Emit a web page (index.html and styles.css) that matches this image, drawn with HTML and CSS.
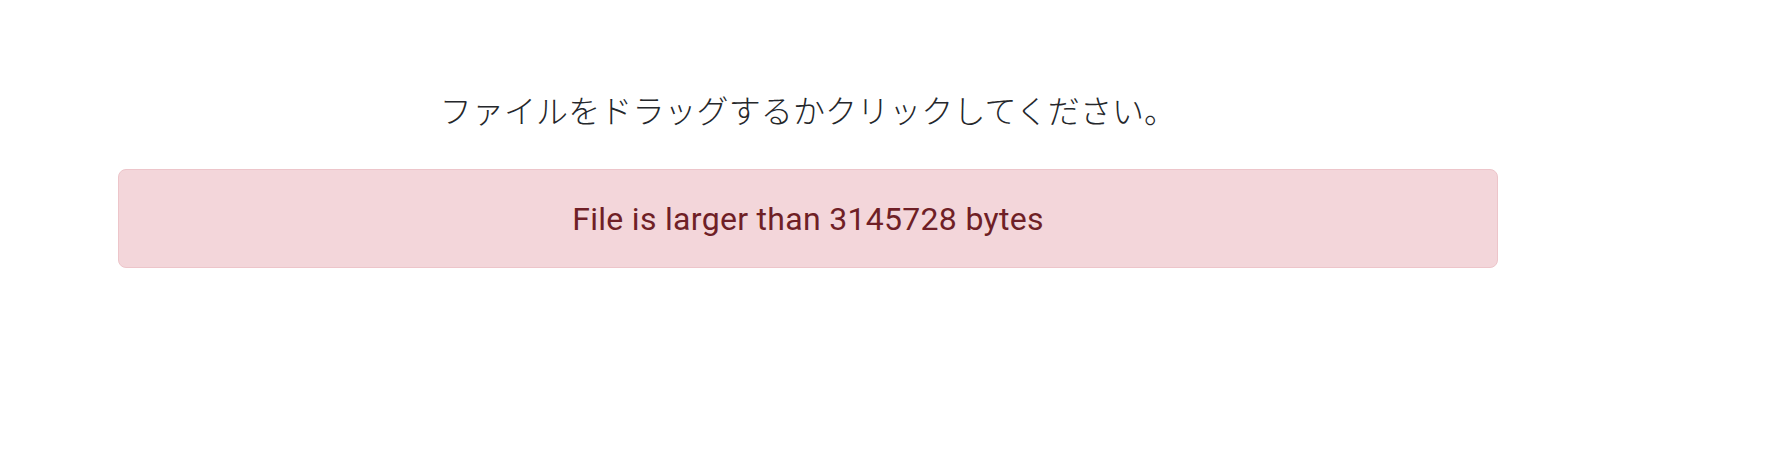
FILE: index.html
```html
<!DOCTYPE html>
<html lang="ja">
<head>
<meta charset="utf-8">
<title>Upload</title>
<link rel="stylesheet" href="styles.css">
</head>
<body>
<main class="upload">
  <p class="dropzone-text">ファイルをドラッグするかクリックしてください。</p>
  <div class="alert alert-danger" role="alert">File is larger than 3145728 bytes</div>
</main>
</body>
</html>
```

FILE: styles.css
```css
html, body {
  margin: 0;
  padding: 0;
  background: #ffffff;
}

body {
  font-family: Roboto, "Noto Sans CJK JP", sans-serif;
  font-size: 32px;
  line-height: 48px;
  color: #212529;
}

.upload {
  width: 1380px;
  margin-left: 118px;
  padding-top: 85px;
}

.dropzone-text {
  margin: 0 0 36px;
  text-align: center;
  font-family: "Noto Sans CJK JP", sans-serif;
  font-weight: 300;
  letter-spacing: 0.1px;
  color: #25272b;
}

.alert {
  box-sizing: border-box;
  height: 99px;
  padding: 25px 40px 24px;
  border: 1px solid #edc5ca;
  border-radius: 8px;
  text-align: center;
  letter-spacing: 0.3px;
}

.alert-danger {
  background: #f3d6da;
  color: #6f1f26;
}
```
